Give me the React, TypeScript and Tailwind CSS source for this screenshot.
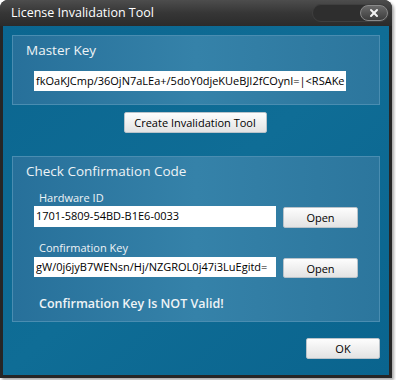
import { X } from "lucide-react";

const font = "font-['Open_Sans','Noto_Sans',sans-serif]";

function Btn({ label, className }: { label: string; className: string }) {
  return (
    <button
      type="button"
      className={`flex items-center justify-center rounded-[2px] border border-[#b9c3ca] bg-gradient-to-b from-[#fdfdfd] to-[#e3e3e3] text-[11px] leading-none text-black ${className}`}
    >
      {label}
    </button>
  );
}

function Field({ value, className }: { value: string; className: string }) {
  return (
    <div className={`flex items-center overflow-hidden whitespace-nowrap bg-white pl-[2px] text-[11px] text-black ${className}`}>
      {value}
    </div>
  );
}

export default function App() {
  return (
    <div className={`h-[380px] w-[396px] bg-white ${font}`}>
      <div className="flex h-[378px] w-[392px] flex-col rounded-t-[8px] bg-[#262626] shadow-[2px_2px_3px_rgba(0,0,0,0.35)]">
        {/* title bar */}
        <div className="flex h-[26px] items-center justify-between rounded-t-[8px] bg-gradient-to-b from-[#4d4d4d] via-[#363636] to-[#2b2b2b] pl-[11px] pr-[3px]">
          <span className="text-[12.5px] leading-none text-white">License Invalidation Tool</span>
          <div className="flex h-[18px] w-[77px] items-center justify-end rounded-full border border-[#3f3f3f] bg-[#2e2e2e]">
            <div className="flex h-[16px] w-[28px] items-center justify-center rounded-full border border-[#8a8a8a] bg-gradient-to-b from-[#6a6a6a] to-[#3d3d3d]">
              <X size={12} strokeWidth={4} color="#f2f2f2" />
            </div>
          </div>
        </div>

        {/* client */}
        <div className="mx-[3px] mb-[3px] flex flex-1 flex-col bg-gradient-to-br from-[#0b6690] via-[#0f6d96] to-[#0a648e] px-[9px] pt-[9px]">
          {/* master key */}
          <div className="h-[70px] border border-[#4a8db1] bg-gradient-to-r from-[#27709a] via-[#3582a9] to-[#2c769d] pl-[13px]">
            <div className="mt-[4px] text-[13.5px] leading-[20px] text-[#eef3f6]">Master Key</div>
            <Field
              className="ml-[8px] mt-[11px] h-[20px] w-[312px]"
              value="fkOaKJCmp/36OjN7aLEa+/5doY0djeKUeBJI2fCOynI=|<RSAKe"
            />
          </div>

          <div className="mt-[7px] flex justify-center pr-[2px]">
            <Btn label="Create Invalidation Tool" className="h-[21px] w-[143px]" />
          </div>

          {/* confirmation */}
          <div className="mt-[23px] h-[166px] border border-[#4a8db1] bg-gradient-to-r from-[#27709a] via-[#3582a9] to-[#2c769d] pl-[13px]">
            <div className="mt-[4px] text-[13.5px] leading-[20px] text-[#eef3f6]">Check Confirmation Code</div>
            <div className="ml-[13px] mt-[9px] text-[11px] leading-[16px] text-[#eef3f6]">Hardware ID</div>
            <div className="ml-[8px] flex items-start gap-[7px]">
              <Field className="h-[21px] w-[242px]" value="1701-5809-54BD-B1E6-0033" />
              <Btn label="Open" className="mt-[1px] h-[21px] w-[75px]" />
            </div>
            <div className="ml-[13px] mt-[12px] text-[11px] leading-[16px] text-[#eef3f6]">Confirmation Key</div>
            <div className="ml-[8px] mt-[1px] flex items-start gap-[7px]">
              <Field className="h-[20px] w-[242px]" value="gW/0j6jyB7WENsn/Hj/NZGROL0j47i3LuEgitd=" />
              <Btn label="Open" className="mt-[1px] h-[20px] w-[75px]" />
            </div>
            <div className="ml-[13px] mt-[16px] text-[12.5px] font-semibold leading-[20px] text-[#eef3f6]">
              Confirmation Key Is NOT Valid!
            </div>
          </div>

          <div className="mt-[16px] flex justify-end">
            <Btn label="OK" className="h-[21px] w-[74px]" />
          </div>
        </div>
      </div>
    </div>
  );
}
